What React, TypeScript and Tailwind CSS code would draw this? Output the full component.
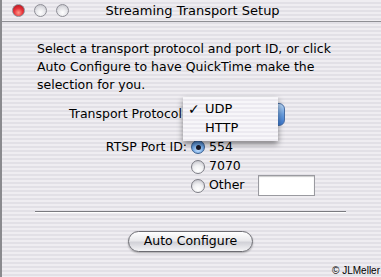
import React from "react";

const stripe =
  "repeating-linear-gradient(to bottom, #efedf1 0px, #efedf1 2px, #e2e0e6 2px, #e2e0e6 4px)";

function Light({ color }: { color: "red" | "gray" }) {
  const bg =
    color === "red"
      ? "radial-gradient(circle at 50% 70%, #ff9a8a 0%, #e8323a 45%, #a3101a 100%)"
      : "radial-gradient(circle at 50% 70%, #ffffff 0%, #e4e4e8 50%, #b9b9c0 100%)";
  return (
    <div
      className="w-[13px] h-[13px] rounded-full border border-[#8e8e96]"
      style={{ background: bg }}
    />
  );
}

function Radio({ selected }: { selected?: boolean }) {
  return selected ? (
    <div
      className="w-[14px] h-[14px] rounded-full border border-[#3a5f8f] flex items-center justify-center"
      style={{ background: "radial-gradient(circle at 50% 70%, #cfe6ff 0%, #6fa6e4 50%, #2d64b0 100%)" }}
    >
      <div className="w-[5px] h-[5px] rounded-full bg-[#1a1a2a]" />
    </div>
  ) : (
    <div
      className="w-[14px] h-[14px] rounded-full border border-[#7d7d85]"
      style={{ background: "radial-gradient(circle at 50% 75%, #ffffff 0%, #f0f0f2 45%, #b8b8c0 100%)" }}
    />
  );
}

export default function App() {
  const font = { fontFamily: '"DejaVu Sans", "Liberation Sans", sans-serif' };
  return (
    <div
      className="relative w-[381px] h-[277px] overflow-hidden text-black border-l-2 border-[#8a8a8e]"
      style={{ background: stripe, ...font }}
    >
      {/* Title bar */}
      <div className="relative h-[22px] flex items-center border-b border-[#8f8f94] rounded-tr-[8px]">
        <div className="flex items-center gap-[9px] pl-[10px]">
          <Light color="red" />
          <Light color="gray" />
          <Light color="gray" />
        </div>
        <div className="absolute inset-0 flex items-center justify-center text-[13px] pl-[2px]">
          Streaming Transport Setup
        </div>
      </div>

      {/* Body */}
      <div className="pl-[35px] pt-[18px] text-[12.5px] leading-[18px]">
        <p className="w-[320px]">
          Select a transport protocol and port ID, or click Auto Configure to have QuickTime make the selection for you.
        </p>
      </div>

      <div className="mt-[8px] flex items-center h-[24px]">
        <div className="w-[180px] text-right text-[12.5px]">Transport Protocol</div>
        <div className="relative ml-[3px] w-[100px] h-[23px] rounded-[6px] border border-[#4a6fa5]"
          style={{ background: "linear-gradient(to bottom, #b8d6f6 0%, #6a9fe0 50%, #3b78cf 100%)" }}
        />
      </div>

      <div className="mt-[12px] flex">
        <div className="w-[185px] text-right text-[12.5px] leading-[18px]">RTSP Port ID:</div>
        <div className="ml-[4px] flex flex-col text-[12.5px]">
          <div className="flex items-center gap-[4px] h-[18px]">
            <Radio selected />
            <span>554</span>
          </div>
          <div className="flex items-center gap-[4px] h-[19px] mt-[1px]">
            <Radio />
            <span>7070</span>
          </div>
          <div className="flex items-center gap-[4px] h-[19px]">
            <Radio />
            <span>Other</span>
            <div className="ml-[9px] w-[57px] h-[21px] bg-white border border-[#9a9aa0] shadow-[inset_0_1px_1px_rgba(0,0,0,0.2)]" />
          </div>
        </div>
      </div>

      <div className="mt-[16px] ml-[33px] w-[311px] border-t border-[#7a7a80] border-b-white border-b" />

      <div className="mt-[18px] flex justify-center pr-[2px]">
        <div
          className="w-[125px] h-[21px] rounded-full border border-[#6c6c72] flex items-center justify-center text-[12.5px] shadow-[0_1px_2px_rgba(0,0,0,0.3)]"
          style={{ background: "linear-gradient(to bottom, #ffffff 0%, #e9e9ec 45%, #d2d2d8 55%, #f4f4f6 100%)" }}
        >
          Auto Configure
        </div>
      </div>

      {/* Popup menu overlay */}
      <div
        className="absolute left-[181px] top-[97px] w-[95px] h-[44px] shadow-[0_3px_6px_rgba(0,0,0,0.45)] text-[13px]"
        style={{ background: "repeating-linear-gradient(to bottom, #f7f6f9 0px, #f7f6f9 2px, #eceaf0 2px, #eceaf0 4px)" }}
      >
        <div className="flex items-center h-[22px] pl-[5px] pt-[2px]">
          <span className="w-[17px] text-[14px]">✓</span>
          <span>UDP</span>
        </div>
        <div className="flex items-center h-[18px] pl-[22px]">HTTP</div>
      </div>

      {/* Copyright */}
      <div
        className="absolute right-[1px] bottom-[0px] text-[10px] leading-[12px]"
        style={{ fontFamily: '"Liberation Sans", Arial, sans-serif' }}
      >
        © JLMeller
      </div>
    </div>
  );
}
